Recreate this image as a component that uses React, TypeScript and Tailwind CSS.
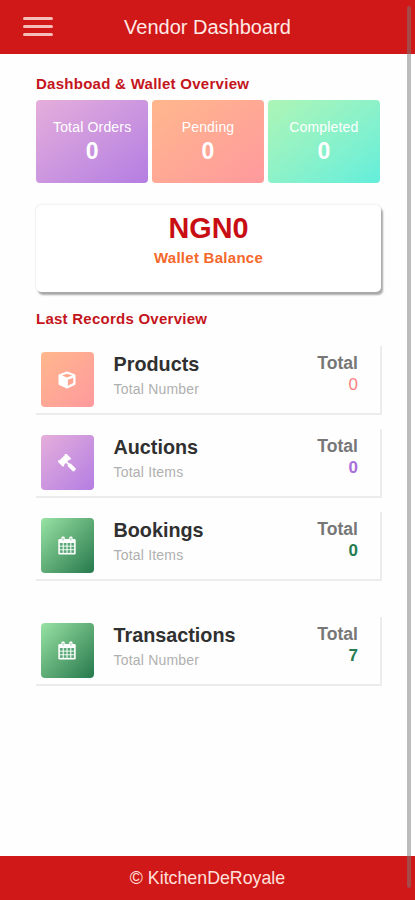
import React from "react";

const CubeIcon = () => (
  <svg viewBox="0 0 18 18" className="h-[18px] w-[18px]">
    <path
      d="M9 .9 17 3.9V13.4L9 17.1 1 13.4V3.9Z"
      fill="#fff"
      stroke="#fff"
      strokeWidth="1"
      strokeLinejoin="round"
    />
    <path d="M4 4.6 9.2 2.8l5 1.8L9 6.5Z" fill="#ffa88f" />
    <path d="M9.9 8.8l5.3-2.1v5.4L9.9 14.7Z" fill="#ffa592" />
  </svg>
);

const GavelIcon = () => (
  <svg viewBox="0 0 18 18" className="h-[18px] w-[18px]" fill="#fff">
    <g transform="translate(6.4 6) rotate(45)">
      <rect x="-3.2" y="-5" width="6.4" height="10" />
      <rect x="-4" y="-5.9" width="8" height="2.1" rx="1" />
      <rect x="-4" y="3.8" width="8" height="2.1" rx="1" />
      <rect x="3" y="-.9" width="4" height="1.8" />
      <rect x="5.8" y="-2" width="9" height="4" rx="1.4" />
    </g>
  </svg>
);

const CalendarIcon = () => (
  <svg viewBox="0 0 18 19" className="h-[19px] w-[18px]" fill="none">
    <rect x=".3" y="3" width="17.4" height="15.6" rx="1.3" fill="#fff" />
    <rect x="3.4" y=".5" width="3.4" height="5" rx="1.4" fill="#fff" />
    <rect x="11.2" y=".5" width="3.4" height="5" rx="1.4" fill="#fff" />
    <path d="M5.1 2v2.6M12.9 2v2.6" stroke="#6fb98a" strokeWidth=".7" />
    <g fill="#5aaa79">
      {[7, 10.6, 14.2].map((y) =>
        [1.9, 5.7, 9.5, 13.3].map((x) => (
          <rect key={`${x}-${y}`} x={x} y={y} width="2.8" height="2.7" />
        )),
      )}
    </g>
  </svg>
);

const stats = [
  { label: "Total Orders", bg: "bg-linear-to-br from-[#e5aedb] to-[#b57de2]" },
  { label: "Pending", bg: "bg-linear-to-br from-[#ffb78c] to-[#ff999d]" },
  { label: "Completed", bg: "bg-linear-to-br from-[#adf5b5] to-[#62eedb]" },
];

const green = "bg-linear-to-br from-[#98e3a4] to-[#24794d]";

const records = [
  { name: "Products", sub: "Total Number", value: "0", color: "font-normal text-[#ff8080]", bg: "bg-linear-to-br from-[#ffb78c] to-[#ff999d]", gap: "", Icon: CubeIcon },
  { name: "Auctions", sub: "Total Items", value: "0", color: "font-bold text-[#aa70da]", bg: "bg-linear-to-br from-[#e5aedb] to-[#b57de2]", gap: "mt-[14px]", Icon: GavelIcon },
  { name: "Bookings", sub: "Total Items", value: "0", color: "font-bold text-[#247c51]", bg: green, gap: "mt-[14px]", Icon: CalendarIcon },
  { name: "Transactions", sub: "Total Number", value: "7", color: "font-bold text-[#247c51]", bg: green, gap: "mt-[36px]", Icon: CalendarIcon },
];

export default function App() {
  return (
    <div className="relative flex h-[900px] w-full flex-col overflow-hidden bg-[#fefefe] font-['Liberation_Sans',Arial,sans-serif]">
      <header className="relative flex h-[54px] shrink-0 items-center justify-center bg-[#d01818]">
        <button aria-label="Menu" className="absolute left-[23px] top-[17px] flex w-[30px] flex-col gap-[5px]">
          <span className="h-[3px] rounded-full bg-[#f5bcb8]" />
          <span className="h-[3px] rounded-full bg-[#f5bcb8]" />
          <span className="h-[3px] rounded-full bg-[#f5bcb8]" />
        </button>
        <h1 className="text-[20px] leading-6 text-[#ffe9e5]">Vendor Dashboard</h1>
      </header>

      <main className="flex-1 pl-9 pr-[34px] pt-[20px]">
        <h2 className="text-[15px] font-bold leading-[20px] tracking-[0.27px] text-[#c4151c]">Dashboad &amp; Wallet Overview</h2>
        <div className="mt-[6px] grid w-[344px] grid-cols-3 gap-[3.5px]">
          {stats.map((s) => (
            <div key={s.label} className={`flex h-[83px] flex-col items-center rounded-[4px] pt-[18px] text-white ${s.bg}`}>
              <span className="text-[14px] leading-[18px] tracking-[0.18px]">{s.label}</span>
              <span className="mt-[2px] text-[23px] font-bold leading-[26px]">0</span>
            </div>
          ))}
        </div>

        <section className="mt-[22px] flex h-[87px] w-[345px] flex-col items-center rounded-[5px] bg-white pt-[6px] shadow-[2px_3px_2px_0px_#a8a8a8,0_0_2px_#d4d4d4]">
          <span className="text-[28.8px] font-bold leading-[34px] text-[#c80e12]">NGN0</span>
          <span className="mt-[3px] text-[15px] font-bold leading-[20px] tracking-[0.28px] text-[#f4682b]">Wallet Balance</span>
        </section>

        <h2 className="mt-[17px] text-[15px] font-bold leading-[20px] tracking-[0.25px] text-[#c4151c]">Last Records Overview</h2>
        <div className="mt-[17px]">
          {records.map(({ name, sub, value, color, bg, gap, Icon }) => (
            <article key={name} className={`flex h-[69px] w-[346px] border-b-2 border-r-2 border-[#ececec] pl-[5px] pr-[22px] pt-[6px] ${gap}`}>
              <div className={`flex h-[55px] w-[53px] shrink-0 items-center justify-center rounded-[4px] pr-px ${bg}`}>
                <Icon />
              </div>
              <div className="ml-[19.5px] flex-1">
                <h3 className="text-[19.8px] font-bold leading-[24px] text-[#303030]">{name}</h3>
                <p className="mt-[5px] text-[14px] leading-[16px] tracking-[0.2px] text-[#b0b0b0]">{sub}</p>
              </div>
              <div className="text-right">
                <p className="text-[17.6px] font-bold leading-[22px] text-[#777]">Total</p>
                <p className={`text-[17px] leading-[22px] ${color}`}>{value}</p>
              </div>
            </article>
          ))}
        </div>
      </main>

      <footer className="flex h-[44px] shrink-0 items-center justify-center bg-[#d01818] text-[17.8px] text-[#ffe0dc]">
        © KitchenDeRoyale
      </footer>
      <div className="absolute left-[407px] top-[6px] h-[882px] w-[4px] rounded-full bg-[#777]/50" />
    </div>
  );
}
